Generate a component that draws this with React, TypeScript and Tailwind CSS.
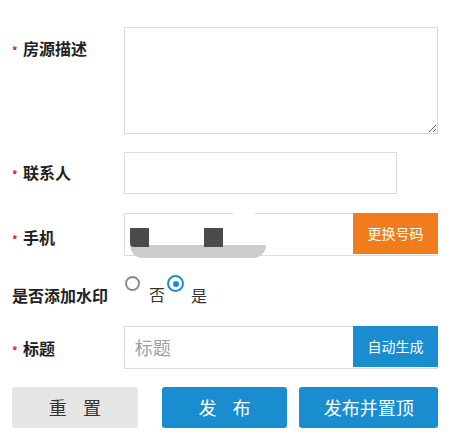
import React from 'react';

const font = "font-['Noto_Sans_CJK_SC','Noto_Sans',sans-serif]";

export default function App() {
  return (
    <div className={`w-[450px] h-[444px] bg-white px-[12px] pt-[27px] ${font}`}>
      {/* 房源描述 */}
      <div className="flex">
        <Label text="房源描述" required className="pt-[10px]" />
        <textarea className="w-[315px] h-[107px] border border-[#dcdcdc] outline-none" />
      </div>

      {/* 联系人 */}
      <div className="flex items-center mt-[18px]">
        <Label text="联系人" required className="pb-[2px]" />
        <input className="w-[273px] h-[42px] border border-[#dcdcdc] outline-none" />
      </div>

      {/* 手机 */}
      <div className="flex items-center mt-[19px]">
        <Label text="手机" required className="pt-[4px]" />
        <div className="relative flex w-[315px] h-[43px] border border-[#dcdcdc]">
          <div className="flex-1" />
          <button className="w-[85px] h-full bg-[#f07c1e] text-white text-[14px] -my-px -mr-px">更换号码</button>
          {/* 打码 */}
          <div className="absolute left-[5px] top-[31px] w-[136px] h-[13px] bg-[#cccccc] rounded-b-[60px]" />
          <div className="absolute left-[5px] top-[14px] w-[19px] h-[19px] bg-[#4b4b4b] rounded-bl-[4px]" />
          <div className="absolute left-[79px] top-[14px] w-[19px] h-[19px] bg-[#4b4b4b]" />
          <div className="absolute left-[108px] -top-[2px] w-[22px] h-[6px] bg-white rounded-full" />
        </div>
      </div>

      {/* 是否添加水印 */}
      <div className="flex mt-[19px] h-[30px]">
        <div className="w-[112px] pt-[9px] text-[16px] font-bold leading-[22px] text-[#222]">是否添加水印</div>
        <div className="flex">
          <span className="mt-[1px] ml-px w-[15px] h-[15px] rounded-full border-2 border-[#8a8a8a]" />
          <span className="mt-[10px] ml-[9px] text-[16px] leading-[18px] text-[#333]">否</span>
          <span className="ml-[2px] w-[17px] h-[17px] rounded-full border-2 border-[#1a8bd2] flex items-center justify-center">
            <span className="w-[6px] h-[6px] rounded-full bg-[#1a8bd2]" />
          </span>
          <span className="mt-[11px] ml-[7px] text-[16px] leading-[18px] text-[#333]">是</span>
        </div>
      </div>

      {/* 标题 */}
      <div className="flex items-center mt-[21px]">
        <Label text="标题" required />
        <div className="flex w-[315px] h-[43px] border border-[#dcdcdc]">
          <input
            placeholder="标题"
            className="flex-1 min-w-0 pl-[10px] text-[18px] placeholder:text-[#a0a0a0] outline-none"
          />
          <button className="w-[85px] h-full bg-[#1a8dd0] text-white text-[14px] -my-px -mr-px">自动生成</button>
        </div>
      </div>

      {/* 按钮 */}
      <div className="flex mt-[18px]">
        <button className="w-[126px] h-[41px] rounded-[3px] bg-[#e6e6e6] text-[#333] text-[18px]">重&nbsp;&nbsp;&nbsp;&nbsp;置</button>
        <button className="ml-[24px] w-[126px] h-[41px] rounded-[3px] bg-[#1a8dd0] text-white text-[18px]">发&nbsp;&nbsp;&nbsp;&nbsp;布</button>
        <button className="ml-[12px] w-[139px] h-[41px] rounded-[3px] bg-[#1a8dd0] text-white text-[18px]">发布并置顶</button>
      </div>
    </div>
  );
}

function Label({ text, required, className = '' }: { text: string; required?: boolean; className?: string }) {
  return (
    <div className={`w-[112px] flex items-start text-[16px] font-bold leading-[22px] text-[#222] ${className}`}>
      {required && <span className="mt-[6px] w-[11px] text-[#c81e1e] text-[11px] leading-[14px]">*</span>}
      <span>{text}</span>
    </div>
  );
}
